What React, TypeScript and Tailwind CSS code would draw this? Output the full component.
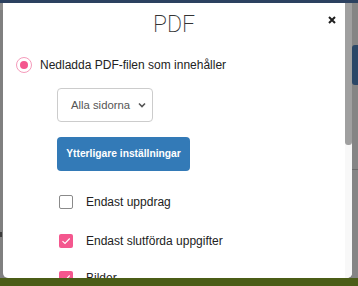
import React from "react";

const CheckRow = ({ label, checked, top }: { label: string; checked: boolean; top: string }) => (
    <div className={`flex items-center h-[14px] shrink-0 gap-[13px] ml-[56px] ${top}`}>
        {checked ? (
            <span className="w-[14px] h-[14px] rounded-[2px] bg-[#f4578e] flex items-center justify-center shrink-0">
                <svg width="10" height="8" viewBox="0 0 10 8" fill="none">
                    <path d="M1.5 4.2 L4 6.5 L8.7 1.5" stroke="white" strokeWidth="1.1" />
                </svg>
            </span>
        ) : (
            <span className="w-[14px] h-[14px] rounded-[2px] border border-[#8a8a8a] bg-white shrink-0" />
        )}
        <span className="text-[12px] leading-[14px] text-[#222]">{label}</span>
    </div>
);

export default function App() {
    return (
        <div
            className="w-[358px] h-[286px] flex flex-col overflow-hidden bg-[#808080]"
            style={{ fontFamily: '"Liberation Sans", Arial, sans-serif' }}
        >
            <div className="h-[3px] bg-[#2c4160] shrink-0" />
            <div className="flex h-[275px] shrink-0">
                {/* left strip of the page behind */}
                <div className="w-[3px] flex flex-col">
                    <div className="h-[7px] bg-[#8e8e8e]" />
                    <div className="h-[222px]" />
                    <div className="h-[5px] w-[2px] bg-[#3d3d3d]" />
                </div>

                {/* modal */}
                <div className="w-[349px] bg-white rounded-b-[5px] overflow-hidden flex">
                    <div className="w-[342px] flex flex-col">
                        <div className="relative pt-[8px] shrink-0">
                            <div
                                className="text-center text-[23px] leading-[28px] font-extralight text-[#333]"
                                style={{ fontFamily: 'Roboto, "Liberation Sans", sans-serif' }}
                            >
                                PDF
                            </div>
                            <button className="absolute right-[6px] top-[10px] p-[3px]">
                                <svg width="8" height="8" viewBox="0 0 8 8">
                                    <path d="M1 1 L7 7 M7 1 L1 7" stroke="#1f1f1f" strokeWidth="2" />
                                </svg>
                            </button>
                        </div>

                        <div className="flex items-center h-[16px] shrink-0 mt-[18px] ml-[13px] gap-[8px]">
                            <span className="w-[16px] h-[16px] rounded-full border-[1.5px] border-[#f59bbb] flex items-center justify-center">
                                <span className="w-[8px] h-[8px] rounded-full bg-[#f4578e]" />
                            </span>
                            <span className="text-[12px] leading-[16px] text-[#222]">
                                Nedladda PDF-filen som innehåller
                            </span>
                        </div>

                        <div className="mt-[15px] ml-[54px] w-[96px] h-[34px] shrink-0 border border-[#cccccc] rounded-[4px] flex items-center justify-between pl-[13px] pr-[6px]">
                            <span className="text-[11.3px] text-[#555]">Alla sidorna</span>
                            <svg width="8" height="6" viewBox="0 0 8 6" fill="none">
                                <path d="M1 1.5 L4 4.5 L7 1.5" stroke="#555" strokeWidth="1.6" />
                            </svg>
                        </div>

                        <button className="mt-[15px] ml-[54px] w-[133px] h-[34px] shrink-0 bg-[#337ab7] rounded-[4px] text-white font-bold text-[10.25px] flex items-center justify-center">
                            Ytterligare inställningar
                        </button>

                        <CheckRow label="Endast uppdrag" checked={false} top="mt-[24px]" />
                        <CheckRow label="Endast slutförda uppgifter" checked={true} top="mt-[25px]" />
                        <CheckRow label="Bilder" checked={true} top="mt-[23px]" />
                    </div>

                    {/* scrollbar */}
                    <div className="w-[7px] bg-[#f8f8f8]">
                        <div className="h-[142px] bg-[#a0a0a0] rounded-b-[3px]" />
                    </div>
                </div>

                {/* right strip of the page behind */}
                <div className="w-[6px] flex flex-col bg-[#858585]">
                    <div className="h-[42px]" />
                    <div className="h-[40px] bg-[#2b4767] rounded-l-[3px]" />
                    <div className="h-[84px]" />
                    <div className="h-[1px] bg-[#6a6a6a]" />
                </div>
            </div>
            <div className="flex-1 bg-[#4b5d17]" />
        </div>
    );
}
